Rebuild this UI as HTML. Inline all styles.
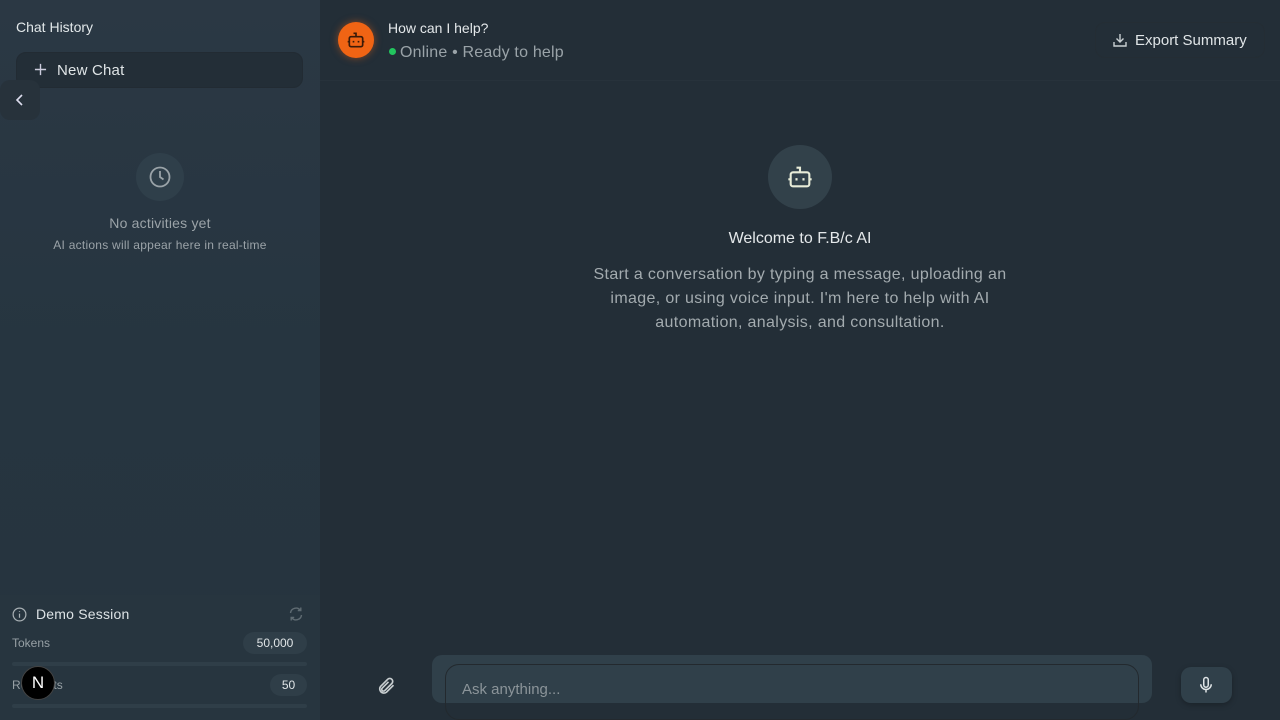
<!DOCTYPE html>
<html><head><meta charset="utf-8"><style>
*{box-sizing:border-box;margin:0;padding:0}
body{width:1280px;height:720px;overflow:hidden;background:#232e37;font-family:"Liberation Sans",sans-serif;position:relative;color:#e5e7eb}
.side{position:absolute;left:0;top:0;width:320px;height:720px;background:linear-gradient(#2b3844,#263540 50%,#26343e)}
.abs{position:absolute}
svg{display:block}
</style></head><body>
<div class="side">
  <div class="abs" style="left:16px;top:19px;font-size:14px;color:#e2e8ea">Chat History</div>
  <div class="abs" style="left:16px;top:52px;width:287px;height:36px;background:#232e37;border-radius:10px;border:1px solid #222b33"></div>
  <div class="abs" style="left:34px;top:63px"><svg width="13" height="13" viewBox="0 0 14 14" stroke="#ccd" stroke-width="1.5"><path d="M7 1v12M1 7h12"/></svg></div>
  <div class="abs" style="left:57px;top:62px;font-size:15px;color:#dfe4e6;letter-spacing:.2px">New Chat</div>
  <div class="abs" style="left:0;top:80px;width:40px;height:40px;background:#27323b;border-radius:10px"></div>
  <div class="abs" style="left:15px;top:94px"><svg width="10" height="12" viewBox="0 0 10 12" fill="none" stroke="#dde" stroke-width="1.6"><path d="M7 1L2 6l5 5"/></svg></div>
  <div class="abs" style="left:136px;top:153px;width:48px;height:48px;border-radius:50%;background:#2f3f4a"></div>
  <div class="abs" style="left:148px;top:165px"><svg width="24" height="24" viewBox="0 0 24 24" fill="none" stroke="#9aa3a8" stroke-width="1.8"><circle cx="12" cy="12" r="9.5"/><path d="M12 6v6l3.5 2.5"/></svg></div>
  <div class="abs" style="left:0;width:320px;top:215px;text-align:center;font-size:14px;color:#9ba3a8;letter-spacing:.2px">No activities yet</div>
  <div class="abs" style="left:0;width:320px;top:238px;text-align:center;font-size:12px;color:#9ba3a8;letter-spacing:.25px">AI actions will appear here in real-time</div>
  <div class="abs" style="left:0;top:595px;width:320px;height:125px;background:#27353f"></div>
  <div class="abs" style="left:12px;top:607px"><svg width="15" height="15" viewBox="0 0 16 16" fill="none" stroke="#a8b0b4" stroke-width="1.3"><circle cx="8" cy="8" r="6.8"/><path d="M8 7v4.5M8 4.5v.8"/></svg></div>
  <div class="abs" style="left:36px;top:606px;font-size:14px;color:#dde3e6;letter-spacing:.2px">Demo Session</div>
  <div class="abs" style="left:288px;top:606px"><svg width="16" height="16" viewBox="0 0 16 16" fill="none" stroke="#5f6b72" stroke-width="1.4"><path d="M2.5 7a5.5 5.5 0 0 1 10-2.5M13.5 9a5.5 5.5 0 0 1-10 2.5M12.8 1.5v3h-3M3.2 14.5v-3h3"/></svg></div>
  <div class="abs" style="left:12px;top:636px;font-size:12px;color:#97a0a5">Tokens</div>
  <div class="abs" style="left:243px;top:632px;width:64px;height:22px;border-radius:11px;background:#2f3e48;font-size:12px;color:#e0e5e7;text-align:center;line-height:22px">50,000</div>
  <div class="abs" style="left:12px;top:662px;width:295px;height:4px;border-radius:2px;background:#2f3e48"></div>
  <div class="abs" style="left:12px;top:678px;font-size:12px;color:#97a0a5">Requests</div>
  <div class="abs" style="left:270px;top:674px;width:37px;height:22px;border-radius:11px;background:#2f3e48;font-size:12px;color:#e0e5e7;text-align:center;line-height:22px">50</div>
  <div class="abs" style="left:12px;top:704px;width:295px;height:4px;border-radius:2px;background:#2f3e48"></div>
  <div class="abs" style="left:21px;top:666px;width:34px;height:34px;border-radius:50%;background:#000;border:1px solid #444;color:#fff;font-size:17px;text-align:center;line-height:32px">N</div>
</div>
<div class="abs" style="left:320px;top:80px;width:960px;height:1px;background:#27323b"></div>
<div class="abs" style="left:338px;top:22px;width:36px;height:36px;border-radius:50%;background:#f06414;box-shadow:0 0 8px rgba(240,100,20,.5)"></div>
<div class="abs" style="left:346px;top:30px"><svg width="20" height="20" viewBox="0 0 24 24" fill="none" stroke="#3a1a08" stroke-width="2"><rect x="4" y="8" width="16" height="12" rx="2"/><path d="M12 8V4H9M2 14h2M20 14h2M9 13v2M15 13v2"/></svg></div>
<div class="abs" style="left:388px;top:20px;font-size:14px;color:#e4e8ea">How can I help?</div>
<div class="abs" style="left:389px;top:48px;width:7px;height:7px;border-radius:50%;background:#22c55e"></div>
<div class="abs" style="left:400px;top:44px;font-size:16px;color:#9aa3a8;letter-spacing:.2px">Online • Ready to help</div>
<div class="abs" style="left:1095px;top:22px;width:170px;height:36px;border-radius:10px;border:1px solid #242d34"></div>
<div class="abs" style="left:1112px;top:32px"><svg width="16" height="16" viewBox="0 0 16 16" fill="none" stroke="#c9d0d3" stroke-width="1.4"><path d="M8 2v8M4.5 6.5L8 10l3.5-3.5M2 10v4h12v-4"/></svg></div>
<div class="abs" style="left:1135px;top:32px;font-size:15px;color:#e0e5e7">Export Summary</div>
<div class="abs" style="left:768px;top:145px;width:64px;height:64px;border-radius:50%;background:#32414a"></div>
<div class="abs" style="left:786px;top:163px"><svg width="28" height="28" viewBox="0 0 24 24" fill="none" stroke="#e8ecd8" stroke-width="1.8"><rect x="4" y="8" width="16" height="12" rx="2"/><path d="M12 8V4H9M2 14h2M20 14h2M9 13v2M15 13v2"/></svg></div>
<div class="abs" style="left:320px;width:960px;top:230px;text-align:center;font-size:16px;color:#e4e8ea">Welcome to F.B/c AI</div>
<div class="abs" style="left:575px;width:450px;top:263px;text-align:center;font-size:16px;line-height:24px;color:#a3abaf;letter-spacing:.35px">Start a conversation by typing a message, uploading an image, or using voice input. I'm here to help with AI automation, analysis, and consultation.</div>
<div class="abs" style="left:376px;top:676px"><svg width="20" height="20" viewBox="0 0 24 24" fill="none" stroke="#c8ced0" stroke-width="2"><path d="M21 11l-8.5 8.5a5 5 0 0 1-7-7L14 4a3.5 3.5 0 0 1 5 5l-8.5 8.5a2 2 0 0 1-3-3L15 7"/></svg></div>
<div class="abs" style="left:432px;top:655px;width:720px;height:48px;border-radius:10px;background:#30404a"></div>
<div class="abs" style="left:445px;top:664px;width:694px;height:56px;border-radius:14px;border:1px solid #23292e"></div>
<div class="abs" style="left:462px;top:681px;font-size:15px;color:#8b9499">Ask anything...</div>
<div class="abs" style="left:1181px;top:667px;width:51px;height:36px;border-radius:10px;background:#30404a;box-shadow:0 2px 6px rgba(0,0,0,.25)"></div>
<div class="abs" style="left:1197px;top:676px"><svg width="18" height="18" viewBox="0 0 24 24" fill="none" stroke="#dfe4e6" stroke-width="2"><rect x="9" y="2" width="6" height="13" rx="3"/><path d="M5 11a7 7 0 0 0 14 0M12 18v4"/></svg></div>
</body></html>
